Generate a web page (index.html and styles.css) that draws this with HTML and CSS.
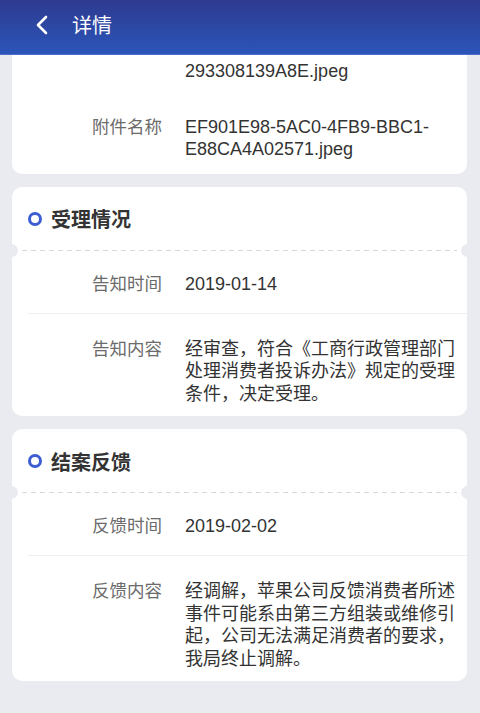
FILE: index.html
```html
<!DOCTYPE html>
<html>

<head>
    <meta charset="utf-8">
    <link rel="stylesheet" href="styles.css">
</head>

<body>
    <div class="topbar">
        <svg class="back" width="14" height="20" viewBox="0 0 14 20">
            <path d="M11 2 L3 10 L11 18" fill="none" stroke="#fff" stroke-width="2.6" stroke-linecap="round" stroke-linejoin="round" />
        </svg>
        <span class="topbar-title">详情</span>
    </div>

    <div class="page">
        <div class="card card-cut">
            <div class="file-row file-first">
                <div class="label"></div>
                <div class="value">293308139A8E.jpeg</div>
            </div>
            <div class="file-row file-last">
                <div class="label">附件名称</div>
                <div class="value">EF901E98-5AC0-4FB9-BBC1-E88CA4A02571.jpeg</div>
            </div>
        </div>

        <div class="card">
            <div class="card-head">
                <span class="dot"></span>
                <span class="card-title">受理情况</span>
            </div>
            <div class="row">
                <div class="label">告知时间</div>
                <div class="value">2019-01-14</div>
            </div>
            <div class="row">
                <div class="label">告知内容</div>
                <div class="value">经审查，符合《工商行政管理部门处理消费者投诉办法》规定的受理条件，决定受理。</div>
            </div>
        </div>

        <div class="card">
            <div class="card-head">
                <span class="dot"></span>
                <span class="card-title">结案反馈</span>
            </div>
            <div class="row">
                <div class="label">反馈时间</div>
                <div class="value">2019-02-02</div>
            </div>
            <div class="row">
                <div class="label">反馈内容</div>
                <div class="value">经调解，苹果公司反馈消费者所述事件可能系由第三方组装或维修引起，公司无法满足消费者的要求，我局终止调解。</div>
            </div>
        </div>
    </div>
</body>

</html>
```

FILE: styles.css
```css
body {
    margin: 0;
    height: 713px;
    overflow: hidden;
    background: #e9ebf0;
    font-family: "Liberation Sans", "Noto Sans CJK SC", sans-serif;
    color: #333;
}

.topbar {
    height: 55px;
    display: flex;
    align-items: center;
    padding: 0 0 5px 35px;
    box-sizing: border-box;
    background: linear-gradient(180deg, #2e3a90, #2b55b9);
    border-bottom: 1px solid #4d6dcc;
}

.back {
    display: block;
}

.topbar-title {
    margin-left: 23px;
    color: #fff;
    font-size: 20px;
    font-family: "Noto Sans CJK SC", sans-serif;
}

.page {
    padding: 0 13px 0 12px;
    display: flex;
    flex-direction: column;
    gap: 13px;
}

.card {
    background: #fff;
    border-radius: 10px;
    padding-right: 10px;
}

.card-cut {
    border-radius: 0 0 10px 10px;
}

.card-head {
    position: relative;
    display: flex;
    align-items: center;
    height: 64px;
    padding-left: 16px;
    box-sizing: border-box;
    margin-right: -10px;
    background-image: repeating-linear-gradient(90deg, #d6d8dc 0 5px, transparent 5px 9px);
    background-size: calc(100% - 20px) 1px;
    background-position: 10px bottom;
    background-repeat: no-repeat;
}

.card-head::before,
.card-head::after {
    content: "";
    position: absolute;
    bottom: -6px;
    width: 13px;
    height: 13px;
    border-radius: 50%;
    background: #e9ebf0;
}

.card-head::before {
    left: -7px;
}

.card-head::after {
    right: -7px;
}

.dot {
    width: 8px;
    height: 8px;
    border: 3px solid #3d5dd2;
    border-radius: 50%;
}

.card-title {
    margin-left: 9px;
    font-size: 20px;
    font-weight: bold;
    font-family: "Noto Sans CJK SC", sans-serif;
    color: #333;
}

.row,
.file-row {
    display: flex;
    align-items: flex-start;
    font-size: 18px;
    line-height: 22.5px;
}

.row {
    margin-left: 16px;
    margin-right: -10px;
    padding: 22px 10px 17.5px 0;
    border-bottom: 1px solid #eeeff1;
}

.row:last-child {
    border-bottom: none;
    padding-top: 24px;
    padding-bottom: 11px;
}

.file-first {
    padding-top: 5px;
}

.file-last {
    padding: 33px 0 13px;
}

.label {
    flex: 0 0 150px;
    text-align: right;
    color: #6b6b6b;
    font-size: 17.5px;
}

.row .label {
    flex-basis: 134px;
}

.value {
    flex: 1;
    margin-left: 23px;
    color: #333;
}
```
